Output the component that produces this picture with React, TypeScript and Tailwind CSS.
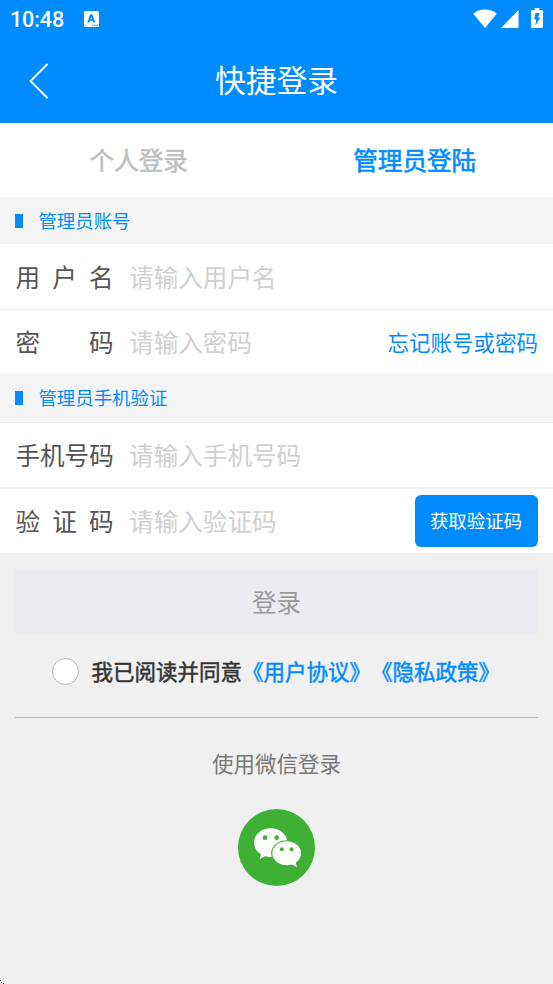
import React, { useState } from 'react';
import { clsx } from 'clsx';

interface FieldRowProps {
  label: string;
  placeholder: string;
  className?: string;
  children?: React.ReactNode;
}

const StatusBar: React.FC = () => (
  <div className="flex h-[37px] items-center pl-[10px] pr-[10px] text-white">
    <span className="font-['Roboto',sans-serif] text-[21.5px] font-medium leading-none tracking-[-0.1px] pt-[2px]">10:48</span>
    <svg className="ml-[20px] h-[16px] w-[15px]" viewBox="0 0 15 16">
      <rect width="15" height="16" rx="1.5" fill="#fff" />
      <path d="M3.3 11.5 6.300 3.300h2l3 8.200H9.200l-.6-1.700H6l-.6 1.700zM6.600 8.200h1.400L7.300 6z" fill="#008cff" />
      <path d="M7.8 14.2h1.4M10.3 14.2h1.4M12.6 14.2h1.2" stroke="#008cff" strokeWidth="1" />
    </svg>
    <svg className="ml-auto h-[19px] w-[24px]" viewBox="0 0 24 19">
      <path d="M0.3 4.7C3.5 2 7.5 0.6 12 0.6s8.5 1.4 11.7 4.1L12 19z" fill="#fff" />
    </svg>
    <svg className="ml-[4px] h-[18px] w-[18px]" viewBox="0 0 18 18">
      <path d="M17.5 0v18H0z" fill="#fff" />
    </svg>
    <svg className="-mt-[2px] ml-[12px] h-[20px] w-[12px]" viewBox="0 0 12 20">
      <path d="M3.7 0h4.6v2H11q1 0 1 1v16q0 1-1 1H1q-1 0-1-1V3q0-1 1-1h2.7z" fill="#fff" />
      <path d="M4.500 5 3.200 11.500h2L4.400 17.500 9.300 9.500H6.900L8.900 5z" fill="#008cff" />
    </svg>
  </div>
);

const SectionTitle: React.FC<{ title: string; className?: string }> = ({ title, className }) => (
  <div className={clsx('flex items-center bg-[#f4f4f4] pl-[15px] text-[18.43px] text-[#008cff]', className)}>
    <span className="h-[14px] w-[8px] bg-[#008cff]" />
    <span className="ml-[15.4px] pb-px leading-none">{title}</span>
  </div>
);

// Label characters are spread over a fixed four-character width
const FieldRow: React.FC<FieldRowProps> = ({ label, placeholder, className, children }) => (
  <div className={clsx('flex items-center bg-white pl-[15.4px] pr-[15px] text-[24.58px]', className)}>
    <label className="flex w-[98.3px] shrink-0 justify-between pb-[2px] leading-none text-[#555]">
      {label.split('').map((char, i) => (
        <span key={i}>{char}</span>
      ))}
    </label>
    <span className="ml-[15.4px] flex-1 whitespace-nowrap pb-[2px] leading-none text-[#d0d0d0]">{placeholder}</span>
    {children}
  </div>
);

const WechatIcon: React.FC = () => (
  <svg className="h-[77px] w-[77px]" viewBox="0 0 231 231">
    <circle cx="115.5" cy="115.5" r="115.5" fill="#3eb135" />
    <ellipse cx="98" cy="101" rx="50" ry="43" fill="#fff" />
    <path d="M70 132 65 150 84 140z" fill="#fff" />
    <ellipse cx="146" cy="133" rx="46.5" ry="39.5" fill="#3eb135" />
    <ellipse cx="146" cy="133" rx="43" ry="36" fill="#fff" />
    <path d="M160 165 177 175 172 156z" fill="#fff" />
    <g fill="#3eb135">
      <circle cx="81" cy="86" r="7" />
      <circle cx="116" cy="86" r="7" />
      <circle cx="131.5" cy="120.5" r="6" />
      <circle cx="160.5" cy="120.5" r="6" />
    </g>
  </svg>
);

export default function App() {
  const [agreed, setAgreed] = useState(false);

  return (
    <div
      lang="zh-CN"
      className="relative flex h-[984px] w-[553px] flex-col overflow-hidden bg-[#f0f0f0] font-['Noto_Sans_CJK_SC',sans-serif]"
    >
      <header className="h-[123px] shrink-0 bg-[#008cff] text-white">
        <StatusBar />
        <div className="grid h-[86px] grid-cols-[60px_1fr_60px] items-center">
          <svg className="ml-[29px] mt-[2px] h-[36px] w-[20px]" viewBox="0 0 20 36">
            <path d="M18.5 1 1.5 18l17 17" fill="none" stroke="#fff" strokeWidth="1.9" />
          </svg>
          <h1 className="pb-[2px] text-center text-[30.72px] leading-none">快捷登录</h1>
        </div>
      </header>

      <nav className="grid h-[74px] shrink-0 grid-cols-2 items-center bg-white pb-[2px] text-center text-[24.58px] leading-none">
        <span className="pl-px text-[#bfbfbf] [-webkit-text-stroke:0.6px_#bfbfbf]">个人登录</span>
        <span className="text-[#008cff] [-webkit-text-stroke:0.6px_#008cff]">管理员登陆</span>
      </nav>

      <SectionTitle title="管理员账号" className="h-[47px]" />
      <FieldRow label="用户名" placeholder="请输入用户名" className="h-[66px] border-b-[1.5px] border-[#ececec] pt-[2px]" />
      <FieldRow label="密码" placeholder="请输入密码" className="h-[64px]">
        <a className="pb-px text-[21.5px] leading-none text-[#008cff]">忘记账号或密码</a>
      </FieldRow>

      <SectionTitle title="管理员手机验证" className="h-[49px] border-b border-[#ececec]" />
      <FieldRow label="手机号码" placeholder="请输入手机号码" className="h-[66px] border-b-2 border-[#f0f0f0]" />
      <FieldRow label="验证码" placeholder="请输入验证码" className="h-[64px]">
        <button className="h-[52px] w-[123px] rounded-[6px] bg-[#008cff] pb-px pr-px text-[18.43px] leading-none text-white">
          获取验证码
        </button>
      </FieldRow>

      <button className="mx-[15px] mt-[17px] h-[64px] shrink-0 bg-[#ebebf1] pb-[2px] text-[24.58px] leading-none text-[#999]">
        登录
      </button>

      <div className="ml-[52px] mt-[24px] flex h-[28px] items-center whitespace-nowrap text-[21.5px] leading-none [text-spacing-trim:space-all]">
        <button
          onClick={() => setAgreed(!agreed)}
          className={clsx('-mt-px h-[27px] w-[27px] rounded-full border-[1.5px] border-[#b5b5b5]', agreed ? 'bg-[#008cff]' : 'bg-white')}
        />
        <p className="ml-[12.5px] pb-[2px] text-[#333] [-webkit-text-stroke:0.5px]">
          我已阅读并同意
          <a className="text-[#008cff]">《用户协议》</a>
          <a className="text-[#008cff]">《隐私政策》</a>
        </p>
      </div>

      <div className="mx-[15px] mt-[31px] h-px shrink-0 bg-[#b5b5b5]" />

      <div className="mt-[34px] flex flex-col items-center">
        <span className="text-[21.5px] leading-none text-[#777]">使用微信登录</span>
        <div className="mt-[35px]">
          <WechatIcon />
        </div>
      </div>

      <svg className="absolute bottom-0 left-0 h-[4px] w-[4px]" viewBox="0 0 4 4">
        <path d="M0 0h1v1H0zM1 2h1v1H1zM3 3h1v1H3z" fill="#222" />
      </svg>
    </div>
  );
}
